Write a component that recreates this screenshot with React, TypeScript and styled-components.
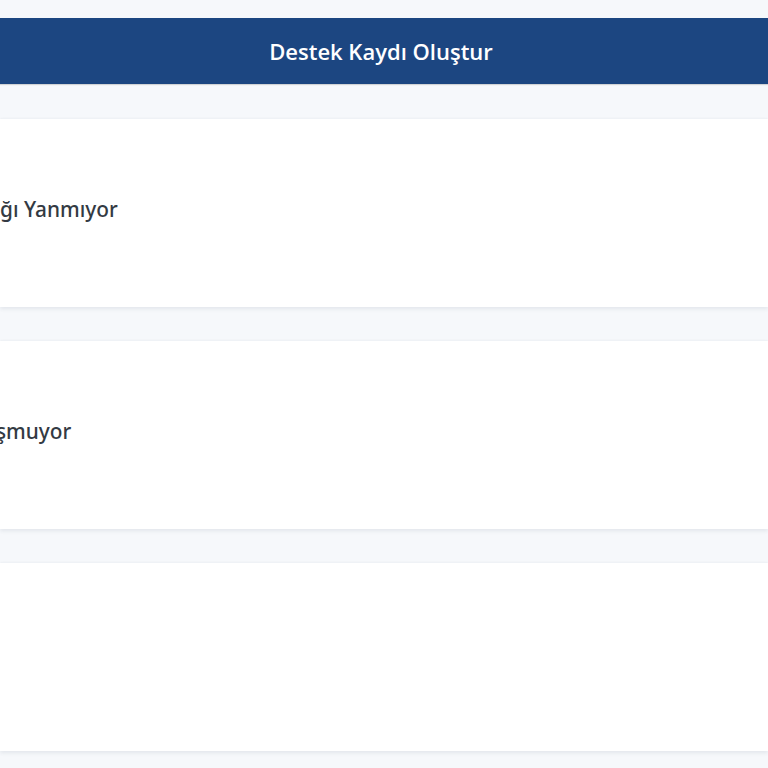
import React from "react";
import styled, { createGlobalStyle } from "styled-components";

const Global = createGlobalStyle`
  html, body {
    margin: 0;
    padding: 0;
    background: #f6f8fb;
    overflow-x: hidden;
  }
  body {
    font-family: "Open Sans", "Noto Sans", sans-serif;
  }
`;

const Page = styled.div`
  display: flex;
  flex-direction: column;
  padding-top: 18px;
  min-height: 768px;
  box-sizing: border-box;
`;

const Header = styled.header`
  height: 66px;
  background: #1c4681;
  display: flex;
  align-items: center;
  justify-content: center;
  color: #ffffff;
  font-size: 22px;
  font-weight: 600;
  padding-right: 6px;
  box-shadow: 0 1px 1px rgba(0, 0, 0, 0.15);
`;

const List = styled.div`
  display: flex;
  flex-direction: column;
  gap: 34px;
  padding-top: 35px;
`;

const Card = styled.div`
  height: 188px;
  background: #ffffff;
  display: flex;
  align-items: center;
  padding-bottom: 8px;
  box-sizing: border-box;
  box-shadow: 0 2px 4px rgba(30, 50, 80, 0.09), 0 -1px 2px rgba(30, 50, 80, 0.03);
`;

const Label = styled.div<{ $shift: number }>`
  font-family: "Noto Sans", "Open Sans", sans-serif;
  font-size: 20.8px;
  font-weight: 500;
  color: #333a43;
  white-space: nowrap;
  display: flex;
  margin-left: ${(p) => p.$shift}px;
`;

const Prefix = styled.span`
  display: inline-flex;
  width: 0;
  justify-content: flex-end;
  white-space: nowrap;
`;

const items = [
  { prefix: "Motor Arıza Işı", rest: "ğı Yanmıyor", shift: 0 },
  { prefix: "Klima Çalı", rest: "şmuyor", shift: -4 },
  { prefix: "", rest: "", shift: 0 },
];

export default function App() {
  return (
    <>
      <Global />
      <Page>
        <Header>Destek Kaydı Oluştur</Header>
        <List>
          {items.map((it, i) => (
            <Card key={i}>
              {it.rest && (
                <Label $shift={it.shift}>
                  <Prefix>{it.prefix}</Prefix>
                  <span>{it.rest}</span>
                </Label>
              )}
            </Card>
          ))}
        </List>
      </Page>
    </>
  );
}
